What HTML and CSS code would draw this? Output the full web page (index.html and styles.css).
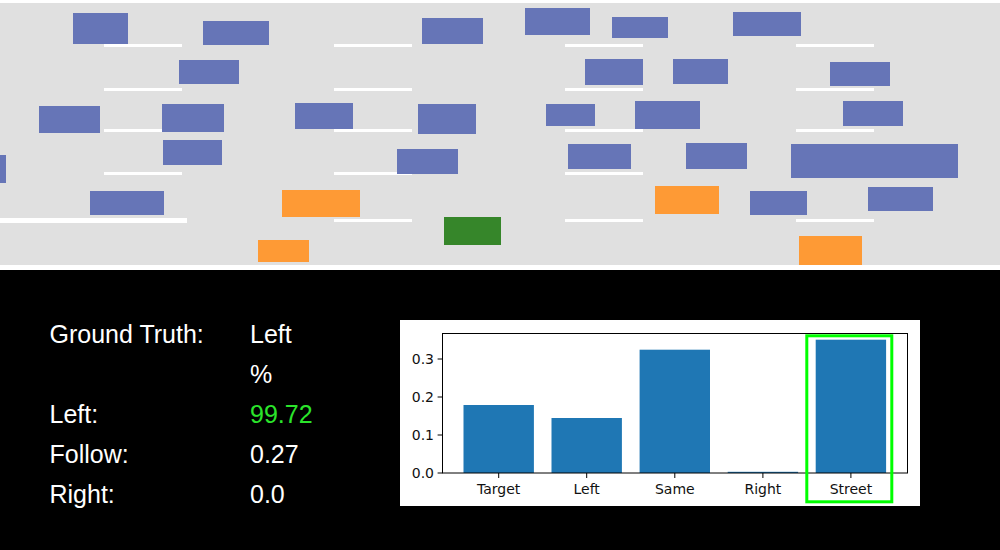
FILE: index.html
```html
<!DOCTYPE html>
<html lang="en">
<head>
    <meta charset="UTF-8">
    <meta name="viewport" content="width=device-width, initial-scale=1.0">
    <title>Lane Change Prediction</title>
    <link rel="stylesheet" href="styles.css">
</head>
<body>
    <div class="scene">
        <svg width="1000" height="270" viewBox="0 0 1000 270">
            <rect class="road" x="0" y="3" width="1000" height="262"/>

            <!-- lane markings -->
            <g class="marking">
                <rect x="104" y="44" width="78" height="3"/>
                <rect x="334" y="44" width="78" height="3"/>
                <rect x="565" y="44" width="78" height="3"/>
                <rect x="796" y="44" width="78" height="3"/>
                <rect x="104" y="88" width="78" height="3"/>
                <rect x="334" y="88" width="78" height="3"/>
                <rect x="565" y="88" width="78" height="3"/>
                <rect x="796" y="88" width="78" height="3"/>
                <rect x="104" y="129" width="78" height="3"/>
                <rect x="334" y="129" width="78" height="3"/>
                <rect x="565" y="129" width="78" height="3"/>
                <rect x="796" y="129" width="78" height="3"/>
                <rect x="104" y="172" width="78" height="3"/>
                <rect x="334" y="172" width="78" height="3"/>
                <rect x="565" y="172" width="78" height="3"/>
                <rect x="796" y="172" width="78" height="3"/>
                <rect x="0" y="218" width="187" height="5"/>
                <rect x="334" y="219" width="78" height="3"/>
                <rect x="565" y="219" width="78" height="3"/>
                <rect x="796" y="219" width="78" height="3"/>
            </g>

            <!-- other vehicles -->
            <g class="car">
                <rect x="73" y="13" width="55" height="31"/>
                <rect x="203" y="21" width="66" height="24"/>
                <rect x="422" y="18" width="61" height="26"/>
                <rect x="525" y="8" width="65" height="27"/>
                <rect x="612" y="17" width="56" height="21"/>
                <rect x="733" y="12" width="68" height="24"/>
                <rect x="179" y="60" width="60" height="24"/>
                <rect x="585" y="59" width="58" height="26"/>
                <rect x="673" y="59" width="55" height="25"/>
                <rect x="830" y="62" width="60" height="24"/>
                <rect x="39" y="106" width="61" height="27"/>
                <rect x="162" y="104" width="62" height="28"/>
                <rect x="295" y="103" width="58" height="26"/>
                <rect x="418" y="104" width="58" height="30"/>
                <rect x="546" y="104" width="49" height="22"/>
                <rect x="635" y="101" width="65" height="28"/>
                <rect x="843" y="101" width="60" height="25"/>
                <rect x="0" y="155" width="6" height="28"/>
                <rect x="163" y="140" width="59" height="25"/>
                <rect x="397" y="149" width="61" height="25"/>
                <rect x="568" y="144" width="63" height="25"/>
                <rect x="686" y="143" width="61" height="26"/>
                <rect x="791" y="144" width="167" height="34"/>
                <rect x="90" y="191" width="74" height="24"/>
                <rect x="750" y="191" width="57" height="24"/>
                <rect x="868" y="187" width="65" height="24"/>
            </g>

            <!-- neighbours in the target lane -->
            <g class="car neighbour">
                <rect x="282" y="190" width="78" height="27"/>
                <rect x="258" y="240" width="51" height="22"/>
                <rect x="655" y="186" width="64" height="28"/>
                <rect x="799" y="236" width="63" height="29"/>
            </g>

            <!-- ego vehicle -->
            <rect class="car ego" x="444" y="217" width="57" height="28"/>
        </svg>
    </div>

    <div class="panel">
        <div class="stats">
            <span>Ground Truth:</span><span>Left</span>
            <span></span><span>%</span>
            <span>Left:</span><span class="best">99.72</span>
            <span>Follow:</span><span>0.27</span>
            <span>Right:</span><span>0.0</span>
        </div>

        <div class="chart">
            <svg width="520" height="186" viewBox="0 0 520 186">
                <rect class="bg" x="0" y="0" width="520" height="186"/>

                <!-- bars: 380px per 1.0, baseline at y=153 -->
                <g class="bar">
                    <rect x="63.5" y="85" width="70.4" height="68"/>
                    <rect x="151.5" y="98" width="70.4" height="55"/>
                    <rect x="239.6" y="29.7" width="70.4" height="123.3"/>
                    <rect x="327.7" y="151.8" width="70.4" height="1.2"/>
                    <rect x="415.7" y="19.7" width="70.4" height="133.3"/>
                </g>

                <rect class="frame" x="42.5" y="13.5" width="465" height="139.5"/>

                <g class="tick">
                    <line x1="37.6" y1="153" x2="42.5" y2="153"/>
                    <line x1="37.6" y1="115" x2="42.5" y2="115"/>
                    <line x1="37.6" y1="77" x2="42.5" y2="77"/>
                    <line x1="37.6" y1="39" x2="42.5" y2="39"/>
                    <line x1="98.7" y1="153" x2="98.7" y2="158"/>
                    <line x1="186.7" y1="153" x2="186.7" y2="158"/>
                    <line x1="274.8" y1="153" x2="274.8" y2="158"/>
                    <line x1="362.9" y1="153" x2="362.9" y2="158"/>
                    <line x1="450.9" y1="153" x2="450.9" y2="158"/>
                </g>

                <g class="ylabel">
                    <text x="34" y="158">0.0</text>
                    <text x="34" y="120">0.1</text>
                    <text x="34" y="82">0.2</text>
                    <text x="34" y="44">0.3</text>
                </g>

                <g class="xlabel">
                    <text x="98.7" y="174">Target</text>
                    <text x="186.7" y="174">Left</text>
                    <text x="274.8" y="174">Same</text>
                    <text x="362.9" y="174">Right</text>
                    <text x="450.9" y="174">Street</text>
                </g>

                <rect class="pick" x="406.8" y="15.8" width="85" height="166"/>
            </svg>
        </div>
    </div>
</body>
</html>
```

FILE: styles.css
```css
body {
    margin: 0;
    padding: 0;
    background-color: #000;
    font-family: "Liberation Sans", Arial, sans-serif;
    color: #fff;
}

.scene svg {
    display: block;
    background: #fff;
}

.road {
    fill: #e0e0e0;
}

.marking rect {
    fill: #fff;
}

.car rect,
rect.car {
    fill: #6675b7;
}

    .car.neighbour rect {
        fill: #fe9a35;
    }

    rect.car.ego {
        fill: #36862a;
    }

.panel {
    display: flex;
    align-items: flex-start;
    padding-left: 49.5px;
    height: 280px;
}

.stats {
    display: grid;
    grid-template-columns: 200.5px 100px;
    width: 350.5px;
    margin-top: 44.3px;
    font-size: 25px;
    line-height: 40px;
}

    .stats .best {
        color: #2be42b;
    }

.chart {
    margin-top: 50px;
}

    .chart svg {
        display: block;
    }

    .chart .bg {
        fill: #fff;
    }

    .chart .bar rect {
        fill: #1f77b4;
    }

    .chart .frame {
        fill: none;
        stroke: #000;
        stroke-width: 1;
    }

    .chart .tick line {
        stroke: #000;
        stroke-width: 1;
    }

    .chart text {
        font-family: "DejaVu Sans", sans-serif;
        font-size: 14px;
        fill: #111;
    }

    .chart .ylabel text {
        text-anchor: end;
    }

    .chart .xlabel text {
        text-anchor: middle;
    }

    .chart .pick {
        fill: none;
        stroke: #00ff00;
        stroke-width: 3;
    }
```
